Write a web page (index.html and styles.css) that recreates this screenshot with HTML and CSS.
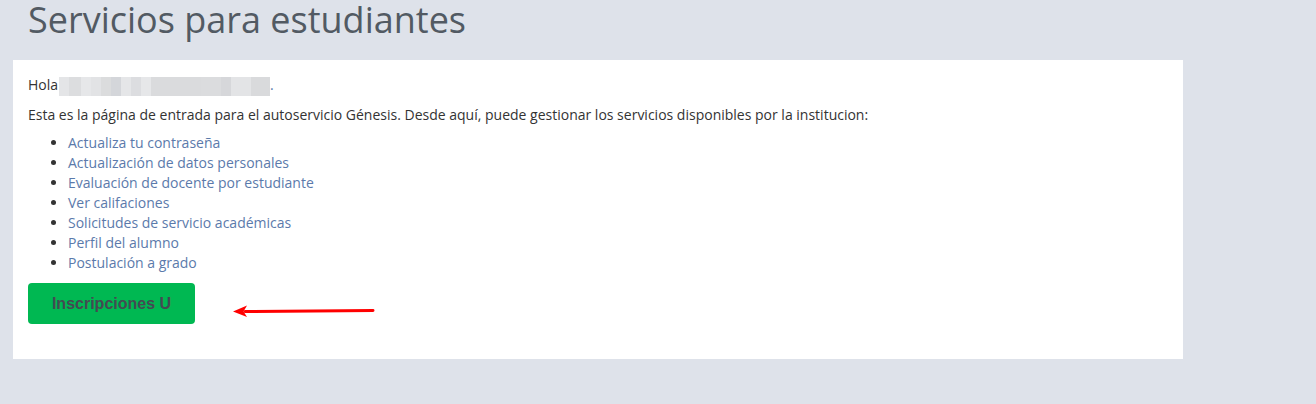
FILE: index.html
```html
<!DOCTYPE html>
<html lang="es">
<head>
<meta charset="utf-8">
<title>Servicios para estudiantes</title>
<link rel="stylesheet" href="styles.css">
</head>
<body>
<div class="page">
  <h1 class="title">Servicios para estudiantes</h1>
  <div class="panel">
    <p class="greet">Hola<span class="blur"><i class="b1"></i><i class="b2"></i><i class="b3"></i><i class="b4"></i><i class="b5"></i><i class="b6"></i><i class="b7"></i><i class="b8"></i><i class="b9"></i><i class="b10"></i><i class="b11"></i><i class="b12"></i><i class="b13"></i><i class="b14"></i></span><span class="dot">.</span></p>
    <p class="intro">Esta es la página de entrada para el autoservicio Génesis. Desde aquí, puede gestionar los servicios disponibles por la institucion:</p>
    <ul class="links">
      <li><a href="#">Actualiza tu contraseña</a></li>
      <li><a href="#">Actualización de datos personales</a></li>
      <li><a href="#">Evaluación de docente por estudiante</a></li>
      <li><a href="#">Ver califaciones</a></li>
      <li><a href="#">Solicitudes de servicio académicas</a></li>
      <li><a href="#">Perfil del alumno</a></li>
      <li><a href="#">Postulación a grado</a></li>
    </ul>
    <div class="action">
      <a class="btn" href="#">Inscripciones U</a>
      <svg class="arrow" width="142" height="14" viewBox="0 0 142 14">
        <path d="M12 7.5 L140 6.5" stroke="#ff0000" stroke-width="3" stroke-linecap="round" fill="none"/>
        <path d="M0 7.6 L14 1.5 L10.5 7.5 L14 13 Z" fill="#ff0000"/>
      </svg>
    </div>
  </div>
</div>
</body>
</html>
```

FILE: styles.css
```css
html, body {
  margin: 0;
  padding: 0;
}
body {
  background: #dee2ea;
  font-family: "Open Sans", "Liberation Sans", sans-serif;
  color: #333;
  width: 1316px;
  height: 404px;
  overflow: hidden;
}
.page {
  padding: 0 133px 0 13px;
}
.title {
  margin: 0;
  padding-left: 15px;
  height: 60px;
  font-size: 36px;
  font-weight: 400;
  line-height: 40px;
  color: #525a63;
}
.panel {
  background: #fff;
  width: 1170px;
  height: 299px;
  box-sizing: border-box;
  padding: 15px 15px 0 15px;
}
.greet {
  margin: 0;
  font-size: 14px;
  line-height: 20px;
  height: 20px;
  display: flex;
  align-items: center;
  color: #333;
}
.blur {
  display: inline-flex;
  height: 19px;
  margin-left: 1px;
  margin-top: 2px;
}
.blur i {
  display: block;
  height: 19px;
}
.b1 { width: 10px; background: #e4e5e7; }
.b2 { width: 12px; background: #dcdddf; }
.b3 { width: 10px; background: #e6e7e9; }
.b4 { width: 10px; background: #e2e3e5; }
.b5 { width: 10px; background: #dbdcdd; }
.b6 { width: 10px; background: #d4d6da; }
.b7 { width: 10px; background: #e5e6e8; }
.b8 { width: 10px; background: #dcdde0; }
.b9 { width: 10px; background: #e6e7e9; }
.b10 { width: 50px; background: #dadbdd; }
.b11 { width: 20px; background: #dbdcde; }
.b12 { width: 10px; background: #d6d7da; }
.b13 { width: 20px; background: #e3e4e6; }
.b14 { width: 19px; background: #d9dadc; }
.dot {
  color: #5b7aab;
}
.intro {
  margin: 10px 0 0 0;
  font-size: 14px;
  line-height: 20px;
  color: #333;
}
.links {
  margin: 8px 0 0 0;
  padding-left: 40px;
  font-size: 14px;
  line-height: 20px;
}
.links li {
  color: #333;
}
.links a {
  color: #5b7aab;
  text-decoration: none;
}
.action {
  display: flex;
  align-items: center;
  margin-top: 10px;
}
.btn {
  display: flex;
  align-items: center;
  justify-content: center;
  width: 167px;
  height: 41px;
  background: #00b852;
  border-radius: 4px;
  color: #444a52;
  font-family: "Liberation Sans", Arial, sans-serif;
  font-weight: 700;
  font-size: 16px;
  text-decoration: none;
}
.arrow {
  display: block;
  margin-left: 38px;
  margin-top: 15px;
}
```
